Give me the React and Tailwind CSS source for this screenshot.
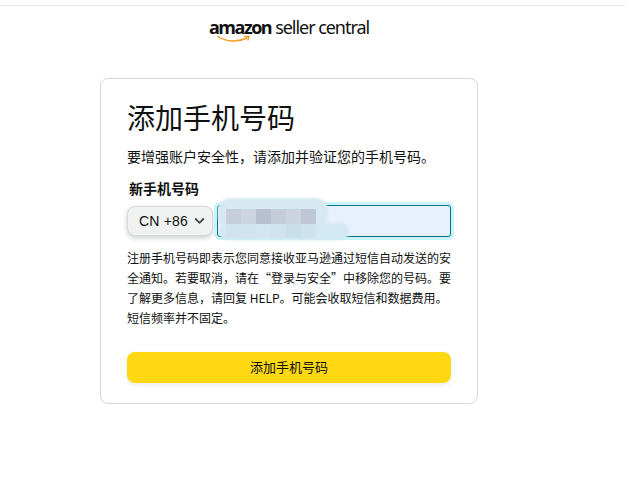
import React from 'react';

const cjk = { fontFamily: '"Liberation Sans", "Noto Sans CJK SC", sans-serif' };
const notice = { fontFamily: '"Noto Sans CJK SC", sans-serif' };

// mosaic squares over the phone number
const mosaic = ['#c6cddb', '#cdd4e1', '#b6c0ce', '#c4cbd9', '#cbd3df', '#bfc6d6'];
const mosaicLower = ['#cfe2ee', '#d0e4f0', '#d2e6f1', '#cfe3ef', '#c9deeb', '#cde2ee', '#d2e8f3'];

function Logo() {
  return (
    <div className="relative flex items-baseline h-[24px] leading-[24px] text-[#111]">
      <span className="text-[18px] font-bold tracking-[-1.5px]" style={{ fontFamily: '"Open Sans", sans-serif' }}>amazon</span>
      <span className="text-[18px] ml-[4px] tracking-[-1.05px]" style={{ fontFamily: '"Noto Sans", sans-serif' }}>seller central</span>
      <svg className="absolute left-[8px] top-[20px]" width="36" height="9" viewBox="0 0 36 9" fill="none">
        <path d="M1 1.5C9 7 21 7.5 30 3" stroke="#f79c20" strokeWidth="1.5" strokeLinecap="round" />
        <path d="M27.5 1.6L32 1.4L31 5" stroke="#f79c20" strokeWidth="1.3" strokeLinecap="round" strokeLinejoin="round" />
      </svg>
    </div>
  );
}

function PhoneRow() {
  return (
    <div className="flex items-center gap-[4px]">
      <button className="flex items-center w-[86px] h-[30px] pl-[11px] bg-[#f0f2f2] border border-[#d5d9d9] rounded-[8px] shadow-[0_2px_5px_rgba(15,17,17,0.2)] text-[14px] text-[#0f1111]">
        <span className="tracking-[0.2px]">CN +86</span>
        <svg className="ml-[6px]" width="11" height="8" viewBox="0 0 11 8" fill="none">
          <path d="M1.2 1.5L5.5 5.8L9.8 1.5" stroke="#444" strokeWidth="1.8" />
        </svg>
      </button>
      <div className="relative w-[234px] h-[32px]">
        <input className="w-full h-full bg-[#e8f0fe] border border-[#007185] rounded-[3px] shadow-[0_0_0_3px_#c8f3fa] outline-none" />
        {/* blurred out number */}
        <div className="absolute left-[1px] top-[-7px] w-[110px] h-[30px] bg-[#d6e9f2] rounded-[12px] blur-[1px]" />
        <div className="absolute left-[2px] top-[18px] w-[130px] h-[17px] bg-[#d2e8f3] rounded-[8px] blur-[1px]" />
        <div className="absolute left-[9px] top-[4px] flex">
          {mosaic.map((c, i) => (
            <div key={i} className="w-[15px] h-[15px]" style={{ background: c }} />
          ))}
        </div>
        <div className="absolute left-[9px] top-[19px] flex">
          {mosaicLower.map((c, i) => (
            <div key={i} className="w-[15px] h-[14px]" style={{ background: c }} />
          ))}
        </div>
      </div>
    </div>
  );
}

export default function App() {
  return (
    <div className="min-h-[484px] bg-white" style={cjk}>
      <div className="h-[6px] border-b border-[#e7e7e7]" />
      <div className="h-[72px] pt-[9px] pl-[209px]">
        <Logo />
      </div>
      <div className="w-[378px] h-[326px] ml-[100px] px-[26px] pt-[23px] bg-white border border-[#d5d9d9] rounded-[8px]">
        <h1 className="text-[28px] leading-[36px] font-normal text-[#0f1111]">添加手机号码</h1>
        <p className="mt-[9px] text-[14px] leading-[20px] text-[#0f1111]">要增强账户安全性，请添加并验证您的手机号码。</p>
        <label className="block mt-[12px] ml-[2px] text-[14px] leading-[20px] font-bold text-[#0f1111]">新手机号码</label>
        <div className="mt-[6px]">
          <PhoneRow />
        </div>
        <p className="mt-[11px] text-[12px] leading-[20px] text-[#0f1111]" style={notice}>
          注册手机号码即表示您同意接收亚马逊通过短信自动发送的安全通知。若要取消，请在“登录与安全”中移除您的号码。要了解更多信息，请回复 HELP。可能会收取短信和数据费用。短信频率并不固定。
        </p>
        <button className="block w-full h-[31px] mt-[24px] bg-[#ffd814] rounded-[8px] shadow-[0_2px_5px_rgba(213,217,217,0.5)] text-[13px] text-[#0f1111]">
          添加手机号码
        </button>
      </div>
    </div>
  );
}
